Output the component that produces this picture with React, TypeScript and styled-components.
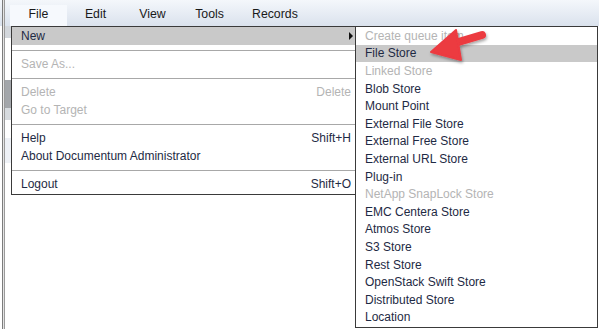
import React from 'react';
import styled, { createGlobalStyle } from 'styled-components';

const GlobalStyle = createGlobalStyle`
  html, body {
    margin: 0;
    padding: 0;
    background: #ffffff;
  }
  body {
    font-family: 'Liberation Sans', Arial, sans-serif;
    font-size: 12px;
    color: #1e2a44;
  }
`;

type Entry =
  | { kind: 'item'; label: string; shortcut?: string; disabled?: boolean; active?: boolean; sub?: boolean }
  | { kind: 'sep' };

const fileMenu: Entry[] = [
  { kind: 'item', label: 'New', active: true, sub: true },
  { kind: 'sep' },
  { kind: 'item', label: 'Save As...', disabled: true },
  { kind: 'sep' },
  { kind: 'item', label: 'Delete', shortcut: 'Delete', disabled: true },
  { kind: 'item', label: 'Go to Target', disabled: true },
  { kind: 'sep' },
  { kind: 'item', label: 'Help', shortcut: 'Shift+H' },
  { kind: 'item', label: 'About Documentum Administrator' },
  { kind: 'sep' },
  { kind: 'item', label: 'Logout', shortcut: 'Shift+O' },
];

const newMenu = [
  { label: 'Create queue item', disabled: true },
  { label: 'File Store', active: true },
  { label: 'Linked Store', disabled: true },
  { label: 'Blob Store' },
  { label: 'Mount Point' },
  { label: 'External File Store' },
  { label: 'External Free Store' },
  { label: 'External URL Store' },
  { label: 'Plug-in' },
  { label: 'NetApp SnapLock Store', disabled: true },
  { label: 'EMC Centera Store' },
  { label: 'Atmos Store' },
  { label: 'S3 Store' },
  { label: 'Rest Store' },
  { label: 'OpenStack Swift Store' },
  { label: 'Distributed Store' },
  { label: 'Location' },
];

const topItems = ['File', 'Edit', 'View', 'Tools', 'Records'];

export default function App() {
  return (
    <>
      <GlobalStyle />
      <Screen>
        <MenuBar>
          <EdgeRule />
          <TopItems>
            {topItems.map((t, i) => (
              <TopItem key={t} open={i === 0}>
                {t}
              </TopItem>
            ))}
          </TopItems>
        </MenuBar>
        <Body>
          <EdgeRule />
          <Backdrop>
            <BackBlock tone="#d3d7dc" h={12} top={0} />
            <BackBlock tone="#a3a6aa" h={28} top={42} />
            <BackBlock tone="#d6dade" h={12} top={0} />
            <BackBlock tone="#eef1f6" h={25} top={18} />
          </Backdrop>
        </Body>

        <FileMenu>
          {fileMenu.map((e, i) =>
            e.kind === 'sep' ? (
              <Separator key={i} />
            ) : (
              <MenuRow key={i} active={e.active} disabled={e.disabled}>
                <span>{e.label}</span>
                {e.shortcut && <span>{e.shortcut}</span>}
                {e.sub && <SubArrow />}
              </MenuRow>
            )
          )}
        </FileMenu>

        <SubMenu>
          {newMenu.map((e) => (
            <SubRow key={e.label} active={e.active} disabled={e.disabled}>
              {e.label}
            </SubRow>
          ))}
        </SubMenu>

        <Pointer width="90" height="45" viewBox="0 0 90 45">
          <defs>
            <filter id="sh" x="-20%" y="-20%" width="150%" height="160%">
              <feDropShadow dx="1" dy="2" stdDeviation="1.5" floodColor="#000" floodOpacity="0.35" />
            </filter>
          </defs>
          <g filter="url(#sh)" fill="#ec3a41" stroke="#ec3a41" strokeLinejoin="round">
            <line x1="72" y1="13" x2="45" y2="21" strokeWidth="8" strokeLinecap="round" />
            <polygon points="21,30 46,8 51,38" strokeWidth="2" />
          </g>
        </Pointer>
      </Screen>
    </>
  );
}

const Screen = styled.div`
  position: relative;
  width: 599px;
  height: 329px;
  overflow: hidden;
  display: flex;
  flex-direction: column;
`;

const MenuBar = styled.div`
  height: 26px;
  display: flex;
  align-items: stretch;
  background: linear-gradient(#f4f7fb, #dae2ed);
`;

const EdgeRule = styled.div`
  width: 3px;
  margin-left: 2px;
  border-left: 1px solid #7c7c7c;
  border-right: 1px solid #9a9a9a;
  box-sizing: border-box;
  background: #e4e4e4;
  flex: none;
`;

const TopItems = styled.div`
  display: flex;
  margin-left: 5px;
  padding-top: 5px;
`;

const TopItem = styled.div<{ open?: boolean }>`
  min-width: 57px;
  box-sizing: border-box;
  padding: 0 14px 3px;
  display: flex;
  align-items: center;
  justify-content: center;
  color: #1a1a1a;
  font-size: 12.3px;
  background: ${(p) => (p.open ? '#f6f9fd' : 'transparent')};
`;

const Body = styled.div`
  flex: 1;
  display: flex;
  background: #fff;
`;

const Backdrop = styled.div`
  width: 6px;
  display: flex;
  flex-direction: column;
`;

const BackBlock = styled.div<{ tone: string; h: number; top: number }>`
  height: ${(p) => p.h}px;
  margin-top: ${(p) => p.top}px;
  background: ${(p) => p.tone};
`;

const FileMenu = styled.div`
  position: absolute;
  left: 11px;
  top: 26px;
  width: 346px;
  box-sizing: border-box;
  border: 1px solid #3a3a3a;
  background: #fff;
  display: flex;
  flex-direction: column;
  padding-bottom: 1px;
`;

const MenuRow = styled.div<{ active?: boolean; disabled?: boolean }>`
  position: relative;
  height: 18px;
  display: flex;
  align-items: center;
  justify-content: space-between;
  padding: 0 5px 0 9px;
  background: ${(p) => (p.active ? '#c9c9c9' : 'transparent')};
  color: ${(p) => (p.disabled ? '#b4b4b4' : '#1e2a44')};
`;

const SubArrow = styled.span`
  position: absolute;
  right: 3px;
  top: 5px;
  width: 0;
  height: 0;
  border-top: 4px solid transparent;
  border-bottom: 4px solid transparent;
  border-left: 4px solid #111;
`;

const Separator = styled.div`
  height: 10px;
  box-sizing: border-box;
  padding-top: 5px;
  &::after {
    content: '';
    display: block;
    height: 1px;
    background: #a8a8a8;
  }
`;

const SubMenu = styled.div`
  position: absolute;
  left: 355px;
  top: 26px;
  width: 243px;
  box-sizing: border-box;
  border: 1px solid #3a3a3a;
  background: #fff;
  display: flex;
  flex-direction: column;
  padding-bottom: 1px;
`;

const SubRow = styled.div<{ active?: boolean; disabled?: boolean }>`
  height: 17.6px;
  display: flex;
  align-items: center;
  padding-left: 9px;
  background: ${(p) => (p.active ? '#c9c9c9' : 'transparent')};
  color: ${(p) => (p.disabled ? '#b4b4b4' : '#1e2a44')};
`;

const Pointer = styled.svg`
  position: absolute;
  left: 410px;
  top: 22px;
  overflow: visible;
`;
